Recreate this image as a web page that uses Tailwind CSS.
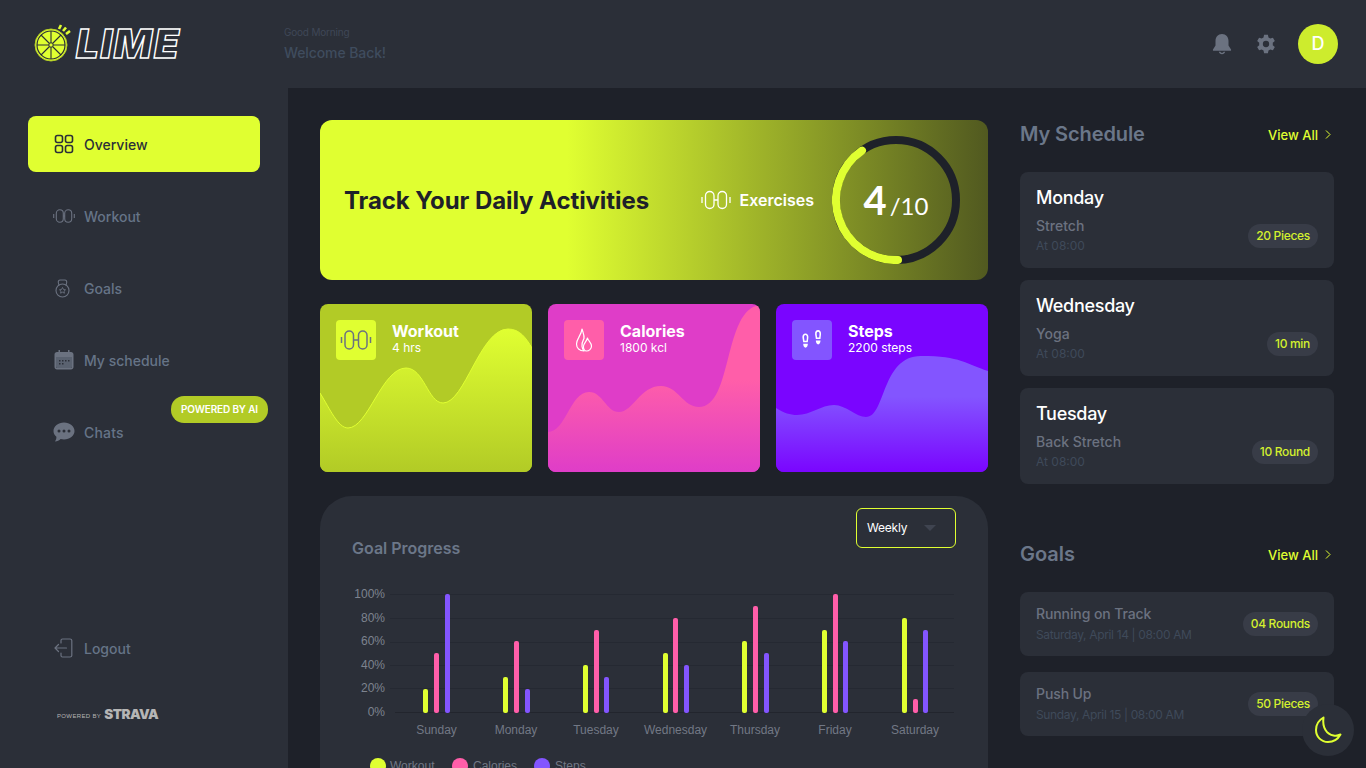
<!DOCTYPE html>
<html lang="en">
<head>
  <meta charset="UTF-8" />
  <meta name="viewport" content="width=device-width, initial-scale=1.0" />
  <title>Lime</title>
  <script src="https://cdn.jsdelivr.net/npm/@tailwindcss/browser@4"></script>
</head>
<body class="font-['Inter',sans-serif] bg-[#1e2129]">
  <div class="relative w-[1366px] h-[768px] overflow-hidden flex flex-col">

    <!-- top bar -->
    <header class="h-[88px] shrink-0 bg-[#2b2f38] flex items-center pr-7">
      <div class="w-[284px] pl-[33px] flex items-center gap-[3px]">
        <svg width="40" height="40" viewBox="0 0 40 40" class="shrink-0 -mt-[5px]" fill="none">
          <circle cx="18" cy="23" r="16" fill="#e0ff31" stroke="#b2cb26" stroke-width="1" />
          <circle cx="18" cy="23" r="14" stroke="#2b2f38" stroke-width="1.2" />
          <g stroke="#2b2f38" stroke-width="1.1">
            <path d="M18 9V37M4 23H32M8 13L28 33M28 13L8 33" />
          </g>
          <circle cx="18" cy="23" r="2.2" fill="#e0ff31" stroke="#2b2f38" stroke-width="1" />
          <path d="M26 7L28 3M30 9L33 5.500M33 12L37 9" stroke="#e0ff31" stroke-width="2.600" />
        </svg>
        <span class="font-black italic text-[40px] leading-none tracking-[1.8px] text-transparent [-webkit-text-stroke:1.4px_#ffffff]">LIME</span>
      </div>
      <div class="flex flex-col -mt-0.5">
        <span class="text-[10px] leading-4 tracking-[-.2px] text-[#3f4757]">Good Morning</span>
        <span class="text-sm leading-5 mt-[3px] font-medium tracking-[-.1px] text-[#3f4c5e]">Welcome Back!</span>
      </div>
      <div class="ml-auto flex items-center">
        <svg width="20" height="22" viewBox="0 0 20 22" fill="#6b7280" class="mr-6">
          <path d="M10 1C6 1 3.500 4 3.500 8V12.500L1 16.500C.7 17.200 1 17.800 1.800 17.800H18.200C19 17.800 19.300 17.200 19 16.500L16.500 12.500V8C16.500 4 14 1 10 1Z" />
          <path d="M6.800 18.800C7.200 20.400 8.400 21.300 10 21.300S12.800 20.400 13.200 18.800H11.700C11.400 19.500 10.800 19.900 10 19.900S8.600 19.500 8.300 18.800Z" />
        </svg>
        <svg width="20" height="20" viewBox="0 0 24 24" fill="#6b7280" class="mr-[22px]">
          <path fill-rule="evenodd" d="M14.300 1H9.700L9 4.300C8.200 4.600 7.500 5 6.900 5.500L3.700 4.400 1.400 8.400 3.900 10.600C3.800 11.400 3.800 12.600 3.900 13.400L1.400 15.600 3.700 19.600 6.900 18.500C7.500 19 8.200 19.400 9 19.700L9.700 23H14.300L15 19.700C15.800 19.400 16.500 19 17.100 18.500L20.300 19.600 22.600 15.600 20.100 13.400C20.200 12.600 20.200 11.400 20.100 10.600L22.600 8.400 20.300 4.400 17.100 5.500C16.500 5 15.800 4.600 15 4.300ZM12 8.200A3.800 3.800 0 1 1 12 15.800 3.800 3.800 0 0 1 12 8.200Z" />
        </svg>
        <div class="w-10 h-10 rounded-full bg-[#cdec2d] flex items-center justify-center text-white text-lg font-medium">D</div>
      </div>
    </header>

    <div class="flex flex-1 min-h-0">
      <!-- sidebar -->
      <aside class="w-[288px] shrink-0 bg-[#2b2f38] flex flex-col pt-7 px-7 pb-[46px]">
        <nav class="flex flex-col gap-4">
          <a class="h-14 rounded-lg bg-[#e0ff31] flex items-center pl-[26px] gap-[10px] text-sm font-medium text-[#2b2f38]">
            <svg width="20" height="20" viewBox="0 0 20 20" fill="none" stroke="#2b2f38" stroke-width="1.600">
              <rect x="1.500" y="1.500" width="7" height="7" rx="2" />
              <rect x="11.500" y="1.500" width="7" height="7" rx="2" />
              <rect x="1.500" y="11.500" width="7" height="7" rx="2" />
              <rect x="11.500" y="11.500" width="7" height="7" rx="2" />
            </svg>
            <span class="mt-0.5">Overview</span>
          </a>
          <a class="h-14 flex items-center pl-[25px] gap-[9px] text-sm font-medium text-[#667487]">
            <svg width="22" height="14" viewBox="0 0 22 14" fill="none" stroke="#6b7280" stroke-width="1.100">
              <path d="M.7 5V9M21.300 5V9M10.300 7H11.700" />
              <rect x="3.300" y=".8" width="7" height="12.400" rx="3.500" />
              <rect x="11.700" y=".8" width="7" height="12.400" rx="3.500" />
            </svg>
            <span class="mt-0.5">Workout</span>
          </a>
          <a class="h-14 flex items-center pl-[26px] gap-[11px] text-sm font-medium text-[#667487]">
            <svg width="19" height="19" viewBox="0 0 19 19" fill="none" stroke="#6b7280" stroke-width="1.100">
              <circle cx="8.500" cy="11.500" r="6.500" />
              <path d="M5 6.500L4.300 3.500C4.100 2 5 1 6 1H11C12 1 12.900 2 12.700 3.500L12 6.500" />
              <path d="M8.500 8.500L9.500 10.500 11.500 10.800 10 12.200 10.400 14.200 8.500 13.200 6.600 14.200 7 12.200 5.500 10.800 7.500 10.500Z" stroke-width=".9" />
            </svg>
            <span class="mt-0.5">Goals</span>
          </a>
          <a class="h-14 flex items-center pl-[26px] gap-[10px] text-sm font-medium text-[#667487]">
            <svg width="20" height="20" viewBox="0 0 20 20" fill="#6b7280">
              <path fill-rule="evenodd" d="M4.500 0H6V2H14V0H15.500V2H17C18.400 2 19.500 3 19.500 4.500V17C19.500 18.500 18.400 19.500 17 19.500H3C1.600 19.500.5 18.500.5 17V4.500C.5 3 1.600 2 3 2H4.500ZM2 7V16.500C2 17.400 2.600 18 3.500 18H16.500C17.400 18 18 17.400 18 16.500V7Z" />
              <path d="M2 7H18V16.500C18 17.400 17.400 18 16.500 18H3.500C2.600 18 2 17.400 2 16.500Z" fill="#5a6270" />
              <path d="M5 10H6.500V11.500H5ZM8 10H9.500V11.500H8ZM11 10H12.500V11.500H11ZM14 10H15.500V11.500H14ZM5 13H6.500V14.500H5ZM8 13H9.500V14.500H8Z" fill="#2b2f38" />
            </svg>
            <span class="mt-0.5">My schedule</span>
          </a>
          <a class="relative h-14 flex items-center pl-[25px] gap-[9px] text-sm font-medium text-[#667487]">
            <svg width="22" height="20" viewBox="0 0 22 20" fill="#6b7280">
              <path fill-rule="evenodd" d="M11 .5C5.200.5.500 4.200.5 9C.5 11.300 1.600 13.300 3.400 14.800C3.500 16.500 3 18 2 19.500C4.300 19.300 6.200 18.500 7.600 17.100C8.700 17.400 9.800 17.500 11 17.500C16.800 17.500 21.500 13.800 21.500 9S16.800.5 11 .5ZM6 7.500A1.500 1.500 0 1 1 6 10.500 1.500 1.500 0 0 1 6 7.500ZM11 7.500A1.500 1.500 0 1 1 11 10.500 1.500 1.500 0 0 1 11 7.500ZM16 7.500A1.500 1.500 0 1 1 16 10.500 1.500 1.500 0 0 1 16 7.500Z" />
            </svg>
            <span class="mt-0.5 tracking-[.2px]">Chats</span>
            <span class="absolute top-[-8px] -right-2 h-[27px] w-[97px] rounded-[13px] bg-[#b2cb26] flex items-center justify-center text-[10px] font-semibold tracking-[-.15px] text-white">POWERED BY AI</span>
          </a>
        </nav>
        <a class="mt-auto h-14 flex items-center pl-[26px] gap-[11px] text-sm font-medium text-[#667487]">
          <svg width="19" height="20" viewBox="0 0 19 20" fill="none" stroke="#6b7280" stroke-width="1.200" stroke-linecap="round" stroke-linejoin="round">
            <path d="M7 5V2.500C7 1.500 7.700 1 8.500 1H16C17 1 17.800 1.500 17.800 2.500V17.500C17.800 18.500 17 19 16 19H8.500C7.700 19 7 18.500 7 17.500V15" />
            <path d="M12.500 10H1M1 10L4.500 6.500M1 10L4.500 13.500" />
          </svg>
          <span class="mt-0.5">Logout</span>
        </a>
        <div class="mt-8 pl-[29px] flex items-center gap-[3px] text-[#b5b5b5] h-[14px]">
          <span class="font-['Liberation_Sans',sans-serif] text-[6px] tracking-[.35px] mt-[3px]">POWERED BY</span>
          <span class="font-black text-[13.5px] leading-none tracking-[-.5px]">STRAVA</span>
        </div>
      </aside>

      <main class="flex-1 min-w-0 flex gap-8 pl-8 pt-8">
        <!-- left column -->
        <section class="w-[668px] shrink-0 flex flex-col gap-6">
          <div class="h-40 shrink-0 rounded-xl bg-[linear-gradient(to_right,#e0ff31_37%,#515920_100%)] flex items-center pl-6 pr-7">
            <h1 class="text-2xl font-bold mt-0.5 text-[#1e2129] tracking-[-.08px]">Track Your Daily Activities</h1>
            <div class="ml-auto flex items-center gap-[9px] mr-[18px]">
              <svg width="30" height="20" viewBox="0 0 30 20" fill="none" stroke="#ffffff" stroke-width="1.300">
                <path d="M1 7V13M29 7V13M13 10H17" />
                <rect x="4.500" y="1.500" width="8.500" height="17" rx="4.250" />
                <rect x="17" y="1.500" width="8.500" height="17" rx="4.250" />
              </svg>
              <span class="text-base font-semibold text-white">Exercises</span>
            </div>
            <div class="relative w-32 h-32 shrink-0 flex items-center justify-center">
              <svg width="128" height="128" viewBox="0 0 128 128" fill="none" class="absolute inset-0">
                <circle cx="64" cy="64" r="60" stroke="#1e2129" stroke-width="8" />
                <path d="M66 124A60 60 0 0 1 30 14.600" stroke="#e0ff31" stroke-width="8" stroke-linecap="round" />
              </svg>
              <div class="relative font-['Lato',sans-serif] text-white flex items-baseline mt-[-1px]">
                <span class="text-[40px] leading-none font-bold">4</span>
                <span class="text-2xl leading-none ml-[3px]">/10</span>
              </div>
            </div>
          </div>

          <div class="grid grid-cols-3 gap-4 shrink-0">
            <div class="relative h-[168px] rounded-lg overflow-hidden bg-[#b2cb26]">
              <svg width="212" height="168" viewBox="0 0 212 168" class="absolute inset-0">
                <defs><linearGradient id="gradWorkout" x1="0" y1="0" x2="0" y2="1"><stop offset="0" stop-color="#e0ff31" /><stop offset="1" stop-color="#b2cb26" /></linearGradient></defs>
                <path d="M0 89C10 105 18 124 28 124C48 124 62 64 86 64C104 64 108 99 123 99C145 99 160 25 188 25C200 25 206 34 212 44V168H0Z" fill="url(#gradWorkout)" />
                <path d="M0 89C10 105 18 124 28 124C48 124 62 64 86 64C104 64 108 99 123 99C145 99 160 25 188 25C200 25 206 34 212 44" fill="none" stroke="#e0ff31" stroke-width="1" />
              </svg>
              <div class="relative flex gap-4 p-4">
                <div class="w-10 h-10 rounded bg-[#e0ff31] flex items-center justify-center">
                  <svg width="32" height="20" viewBox="0 0 32 20" fill="none" stroke="#6b7280" stroke-width="1.500">
                    <path d="M1.500 7V13M30.500 7V13M13.500 10H18.500" />
                    <rect x="5" y="1" width="8.500" height="18" rx="4.250" />
                    <rect x="18.500" y="1" width="8.500" height="18" rx="4.250" />
                  </svg>
                </div>
                <div class="text-white mt-[2px]">
                  <div class="text-base leading-[18px] font-bold">Workout</div>
                  <div class="text-xs leading-4">4 hrs</div>
                </div>
              </div>
            </div>

            <div class="relative h-[168px] rounded-lg overflow-hidden bg-[#df3dc8]">
              <svg width="212" height="168" viewBox="0 0 212 168" class="absolute inset-0">
                <defs><linearGradient id="gradCalories" x1="0" y1="0" x2="0" y2="1"><stop offset=".45" stop-color="#ff5ea9" /><stop offset="1" stop-color="#df3dc8" /></linearGradient></defs>
                <path d="M0 128C18 128 22 88 41 88C55 88 58 108 71 108C85 108 92 82 113 82C130 82 135 103 151 103C185 103 175 5 212 1V168H0Z" fill="url(#gradCalories)" />
              </svg>
              <div class="relative flex gap-4 p-4">
                <div class="w-10 h-10 rounded bg-[#ff5ea9] flex items-center justify-center">
                  <svg width="18" height="24" viewBox="0 0 18 24" fill="none" stroke="#ffffff" stroke-width="1.200" stroke-linejoin="round">
                    <path d="M7 1C8 4.500 9.500 7 9 10.500C8 12.500 6.500 14.500 7 18.500C7.300 20.500 8 21.800 9 23C4.500 23 1.500 20 1.500 16C1.500 11 6.500 7 7 1Z" />
                    <path d="M12.500 10C13 12.500 16.500 14.500 16.500 18C16.500 21 14 23 11.500 23C9.500 23 8 20.500 8.500 18C9 15 11.500 13.500 12.500 10Z" />
                  </svg>
                </div>
                <div class="text-white mt-[2px]">
                  <div class="text-base leading-[18px] font-bold">Calories</div>
                  <div class="text-xs leading-4">1800 kcl</div>
                </div>
              </div>
            </div>

            <div class="relative h-[168px] rounded-lg overflow-hidden bg-[#7a05ff]">
              <svg width="212" height="168" viewBox="0 0 212 168" class="absolute inset-0">
                <defs><linearGradient id="gradSteps" x1="0" y1="0" x2="0" y2="1"><stop offset=".35" stop-color="#8355ff" /><stop offset="1" stop-color="#7a05ff" /></linearGradient></defs>
                <path d="M0 104C8 109 14 111 21 111C35 111 45 101 58 101C70 101 80 113 90 113C110 113 105 52 145 52C185 52 190 60 212 67V168H0Z" fill="url(#gradSteps)" />
              </svg>
              <div class="relative flex gap-4 p-4">
                <div class="w-10 h-10 rounded bg-[#8355ff] flex items-center justify-center">
                  <svg width="22" height="22" viewBox="0 0 20 20" fill="#ffffff">
                    <path fill-rule="evenodd" d="M4 4C5.800 4 7 5.500 6.700 8L6.200 12H2L1.300 8C1 5.500 2.200 4 4 4ZM4 5.500C3.100 5.500 2.600 6.500 2.800 8L3.200 10.700H5L5.300 8C5.500 6.500 4.900 5.500 4 5.500Z" />
                    <path d="M2 13.500H6.200C6.200 15.500 5.300 17 4.100 17S2 15.500 2 13.500Z" />
                    <path fill-rule="evenodd" d="M15.500 1C17.300 1 18.500 2.500 18.200 5L17.700 9H13.500L12.800 5C12.500 2.500 13.700 1 15.500 1ZM15.500 2.500C14.600 2.500 14.100 3.500 14.300 5L14.700 7.700H16.500L16.800 5C17 3.500 16.400 2.500 15.500 2.500Z" />
                    <path d="M13.500 10.500H17.700C17.700 12.500 16.800 14 15.600 14S13.500 12.500 13.500 10.500Z" />
                  </svg>
                </div>
                <div class="text-white mt-[2px]">
                  <div class="text-base leading-[18px] font-bold">Steps</div>
                  <div class="text-xs leading-4">2200 steps</div>
                </div>
              </div>
            </div>
          </div>

          <div class="flex-1 rounded-t-[32px] bg-[#2b2f38] px-8 pt-3">
            <div class="flex justify-between items-start h-[52px]">
              <h2 class="mt-7 text-base leading-6 font-semibold text-[#6b7789]">Goal Progress</h2>
              <div class="w-[100px] h-10 rounded-md border border-[#e0ff31] flex items-center pl-[10px] text-xs tracking-[-.2px] text-white">
                Weekly
                <svg width="12" height="6" viewBox="0 0 12 6" fill="#3f4450" class="ml-[17px]"><path d="M0 0H12L6 6Z" /></svg>
              </div>
            </div>
            <svg width="604" height="186" viewBox="352 560 604 186" class="block font-['Liberation_Sans',sans-serif] text-xs">
              <g stroke="#252932" stroke-width="1">
                <path d="M390 594.500H954M390 618.500H954M390 642.500H954M390 665.500H954M390 688.500H954" />
                <path d="M395 712.500H954" stroke="#22252d" />
              </g>
              <g fill="#7d838f" text-anchor="end">
                <text x="385" y="598">100%</text>
                <text x="385" y="622">80%</text>
                <text x="385" y="645">60%</text>
                <text x="385" y="669">40%</text>
                <text x="385" y="692">20%</text>
                <text x="385" y="716">0%</text>
              </g>
              <g fill="#727885" text-anchor="middle">
                <text x="436.500" y="734">Sunday</text>
                <text x="516" y="734">Monday</text>
                <text x="596" y="734">Tuesday</text>
                <text x="675.500" y="734">Wednesday</text>
                <text x="755" y="734">Thursday</text>
                <text x="835" y="734">Friday</text>
                <text x="915" y="734">Saturday</text>
              </g>
              <g fill="#e0ff31">
                <rect x="423" y="689" width="5" height="24" rx="2" />
                <rect x="503" y="677" width="5" height="36" rx="2" />
                <rect x="583" y="665" width="5" height="48" rx="2" />
                <rect x="663" y="653" width="5" height="60" rx="2" />
                <rect x="742" y="641" width="5" height="72" rx="2" />
                <rect x="822" y="630" width="5" height="83" rx="2" />
                <rect x="902" y="618" width="5" height="95" rx="2" />
              </g>
              <g fill="#ff5ea9">
                <rect x="434" y="653" width="5" height="60" rx="2" />
                <rect x="514" y="641" width="5" height="72" rx="2" />
                <rect x="594" y="630" width="5" height="83" rx="2" />
                <rect x="673" y="618" width="5" height="95" rx="2" />
                <rect x="753" y="606" width="5" height="107" rx="2" />
                <rect x="833" y="594" width="5" height="119" rx="2" />
                <rect x="913" y="699" width="5" height="14" rx="2" />
              </g>
              <g fill="#8355ff">
                <rect x="445" y="594" width="5" height="119" rx="2" />
                <rect x="525" y="689" width="5" height="24" rx="2" />
                <rect x="604" y="677" width="5" height="36" rx="2" />
                <rect x="684" y="665" width="5" height="48" rx="2" />
                <rect x="764" y="653" width="5" height="60" rx="2" />
                <rect x="843" y="641" width="5" height="72" rx="2" />
                <rect x="923" y="630" width="5" height="83" rx="2" />
              </g>
            </svg>
            <div class="flex items-center mt-3 pl-[18px] font-['Liberation_Sans',sans-serif] text-xs text-[#727885]">
              <span class="w-4 h-4 rounded-full bg-[#e0ff31]"></span><span class="ml-1 w-[62px]">Workout</span>
              <span class="w-4 h-4 rounded-full bg-[#ff5ea9]"></span><span class="ml-[5px] w-[61px]">Calories</span>
              <span class="w-4 h-4 rounded-full bg-[#8355ff]"></span><span class="ml-[5px]">Steps</span>
            </div>
          </div>
        </section>

        <!-- right column -->
        <section class="w-[314px] shrink-0 flex flex-col">
          <div class="h-7 flex items-center justify-between">
            <h2 class="text-xl font-semibold tracking-[-.1px] text-[#6b7789]">My Schedule</h2>
            <a class="flex items-center gap-[7px] text-[13px] leading-[20px] font-medium text-[#e0ff31]"><span class="mt-0.5">View All</span>
              <svg width="6" height="9" viewBox="0 0 6 9" fill="none" stroke="#e0ff31" stroke-width="1" class="mr-[3px]"><path d="M1 .5L5 4.500 1 8.500" /></svg>
            </a>
          </div>
          <div class="mt-6 flex flex-col gap-3">
            <div class="h-24 rounded-lg bg-[#2b2f38] px-4 pt-[13px] relative">
              <div class="text-lg leading-6 font-medium tracking-[-.3px] text-white mt-px">Monday</div>
              <div class="mt-[6px] text-sm leading-5 font-medium text-[#6b7280]">Stretch</div>
              <div class="text-xs leading-5 text-[#3f4a5a]">At 08:00</div>
              <span class="absolute right-4 top-[52px] h-6 px-2 rounded-full bg-[#383c47] flex items-center text-xs font-medium tracking-[-.3px] text-[#d4f02e]">20 Pieces</span>
            </div>
            <div class="h-24 rounded-lg bg-[#2b2f38] px-4 pt-[13px] relative">
              <div class="text-lg leading-6 font-medium tracking-[-.3px] text-white mt-px">Wednesday</div>
              <div class="mt-[6px] text-sm leading-5 font-medium text-[#6b7280]">Yoga</div>
              <div class="text-xs leading-5 text-[#3f4a5a]">At 08:00</div>
              <span class="absolute right-4 top-[52px] h-6 px-2 rounded-full bg-[#383c47] flex items-center text-xs font-medium tracking-[-.3px] text-[#d4f02e]">10 min</span>
            </div>
            <div class="h-24 rounded-lg bg-[#2b2f38] px-4 pt-[13px] relative">
              <div class="text-lg leading-6 font-medium tracking-[-.3px] text-white mt-px">Tuesday</div>
              <div class="mt-[6px] text-sm leading-5 font-medium text-[#6b7280]">Back Stretch</div>
              <div class="text-xs leading-5 text-[#3f4a5a]">At 08:00</div>
              <span class="absolute right-4 top-[52px] h-6 px-2 rounded-full bg-[#383c47] flex items-center text-xs font-medium tracking-[-.3px] text-[#d4f02e]">10 Round</span>
            </div>
          </div>

          <div class="mt-14 h-7 flex items-center justify-between">
            <h2 class="text-xl font-semibold text-[#6b7789]">Goals</h2>
            <a class="flex items-center gap-[7px] text-[13px] leading-[20px] font-medium text-[#e0ff31]"><span class="mt-0.5">View All</span>
              <svg width="6" height="9" viewBox="0 0 6 9" fill="none" stroke="#e0ff31" stroke-width="1" class="mr-[3px]"><path d="M1 .5L5 4.500 1 8.500" /></svg>
            </a>
          </div>
          <div class="mt-6 flex flex-col gap-4">
            <div class="h-16 rounded-lg bg-[#2b2f38] px-4 flex items-center justify-between">
              <div>
                <div class="text-sm leading-5 font-medium tracking-[-.1px] text-[#6b7280]">Running on Track</div>
                <div class="text-xs leading-[21px] tracking-[-.35px] text-[#3f4a5a]">Saturday, April 14 | 08:00 AM</div>
              </div>
              <span class="h-6 px-2 rounded-full bg-[#383c47] flex items-center text-xs font-medium tracking-[-.3px] text-[#d4f02e]">04 Rounds</span>
            </div>
            <div class="h-16 rounded-lg bg-[#2b2f38] px-4 flex items-center justify-between">
              <div>
                <div class="text-sm leading-5 font-medium tracking-[-.1px] text-[#6b7280]">Push Up</div>
                <div class="text-xs leading-[21px] tracking-[-.35px] text-[#3f4a5a]">Sunday, April 15 | 08:00 AM</div>
              </div>
              <span class="h-6 px-2 rounded-full bg-[#383c47] flex items-center text-xs font-medium tracking-[-.3px] text-[#d4f02e]">50 Pieces</span>
            </div>
          </div>
        </section>
      </main>
    </div>

    <!-- theme toggle floats over the page -->
    <button class="absolute right-3 bottom-3 w-[52px] h-[52px] rounded-full bg-[#2b2f38] flex items-center justify-center">
      <svg width="28" height="28" viewBox="0 0 28 28" fill="none" stroke="#e0ff31" stroke-width="2" stroke-linejoin="round">
        <path d="M9.500 1.500C5 4 2 8 2 14C2 21 7.500 26 14 26C19.500 26 24 23 26.500 18.500C24.500 19.500 22 20 19.500 19.500C13 18.500 8 12 9.500 1.500Z" />
      </svg>
    </button>
  </div>
</body>
</html>
